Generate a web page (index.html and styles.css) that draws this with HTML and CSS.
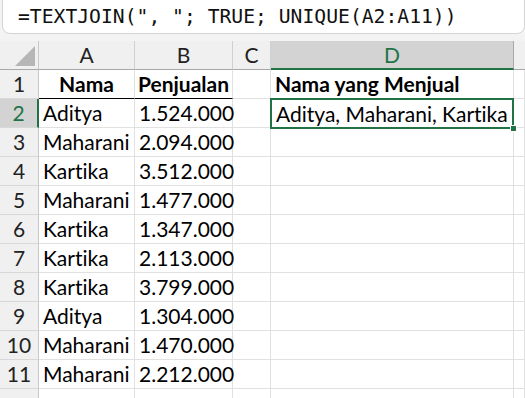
FILE: index.html
```html
<!DOCTYPE html>
<html>
<head>
<meta charset="utf-8">
<link rel="stylesheet" href="styles.css">
</head>
<body>
<div class="app">
  <div class="fbar-wrap">
    <div class="fbar">=TEXTJOIN(", "; TRUE; UNIQUE(A2:A11))</div>
  </div>
  <div class="sheet">
    <div class="corner"><span class="tri"></span></div>
    <div class="ch">A</div>
    <div class="ch">B</div>
    <div class="ch">C</div>
    <div class="ch sel">D</div>
    <div class="ch last"></div>

    <div class="rh">1</div>
    <div class="c b center hb">Nama</div>
    <div class="c b center hb">Penjualan</div>
    <div class="c"></div>
    <div class="c b">Nama yang Menjual</div>
    <div class="c"></div>

    <div class="rh sel">2</div>
    <div class="c">Aditya</div>
    <div class="c num">1.524.000</div>
    <div class="c"></div>
    <div class="c active">Aditya, Maharani, Kartika<span class="handle"></span></div>
    <div class="c"></div>

    <div class="rh">3</div>
    <div class="c">Maharani</div>
    <div class="c num">2.094.000</div>
    <div class="c"></div><div class="c"></div><div class="c"></div>

    <div class="rh">4</div>
    <div class="c">Kartika</div>
    <div class="c num">3.512.000</div>
    <div class="c"></div><div class="c"></div><div class="c"></div>

    <div class="rh">5</div>
    <div class="c">Maharani</div>
    <div class="c num">1.477.000</div>
    <div class="c"></div><div class="c"></div><div class="c"></div>

    <div class="rh">6</div>
    <div class="c">Kartika</div>
    <div class="c num">1.347.000</div>
    <div class="c"></div><div class="c"></div><div class="c"></div>

    <div class="rh">7</div>
    <div class="c">Kartika</div>
    <div class="c num">2.113.000</div>
    <div class="c"></div><div class="c"></div><div class="c"></div>

    <div class="rh">8</div>
    <div class="c">Kartika</div>
    <div class="c num">3.799.000</div>
    <div class="c"></div><div class="c"></div><div class="c"></div>

    <div class="rh">9</div>
    <div class="c">Aditya</div>
    <div class="c num">1.304.000</div>
    <div class="c"></div><div class="c"></div><div class="c"></div>

    <div class="rh">10</div>
    <div class="c">Maharani</div>
    <div class="c num">1.470.000</div>
    <div class="c"></div><div class="c"></div><div class="c"></div>

    <div class="rh">11</div>
    <div class="c">Maharani</div>
    <div class="c num">2.212.000</div>
    <div class="c"></div><div class="c"></div><div class="c"></div>

    <div class="rh"></div>
    <div class="c"></div><div class="c"></div><div class="c"></div><div class="c"></div><div class="c"></div>
  </div>
</div>
</body>
</html>
```

FILE: styles.css
```css
* { box-sizing: border-box; }
html, body { margin: 0; padding: 0; }
body {
  width: 525px;
  height: 398px;
  overflow: hidden;
  background: #f3f3f3;
  font-family: Lato, "Liberation Sans", sans-serif;
  font-variant-ligatures: none;
  color: #000;
}
.app { display: flex; flex-direction: column; height: 398px; overflow: hidden; }
.fbar-wrap { height: 41px; flex: none; padding-left: 2px; }
.fbar {
  height: 42px;
  margin-top: -8px;
  background: #fff;
  border: 1px solid #d4d4d4;
  border-radius: 8px;
  font-family: "DejaVu Sans Mono", "Liberation Mono", monospace;
  font-size: 19.7px;
  line-height: 22px;
  padding: 13px 0 0 15px;
  white-space: pre;
  color: #111;
}
.sheet {
  display: grid;
  grid-template-columns: 39px 96px 98px 38px 243px 1fr;
  grid-template-rows: 29px repeat(12, 29px);
  background: #fff;
}
.corner {
  background: #f0f0f0;
  border-right: 1px solid #c8c8c8;
  border-bottom: 1px solid #a8a8a8;
  position: relative;
}
.tri {
  position: absolute;
  right: 3px;
  bottom: 3px;
  width: 0; height: 0;
  border-left: 20px solid transparent;
  border-bottom: 20px solid #b6b6b6;
}
.ch {
  background: #f0f0f0;
  border-right: 1px solid #d0d0d0;
  border-bottom: 1px solid #a8a8a8;
  font-size: 21px;
  text-align: center;
  line-height: 28px;
  color: #222;
}
.ch.sel {
  background: #d3d3d3;
  color: #217346;
  border-bottom: 2px solid #217346;
  border-right-color: #a8a8a8;
}
.ch.last { border-right: none; }
.rh {
  background: #f0f0f0;
  border-right: 1px solid #c8c8c8;
  border-bottom: 1px solid #d8d8d8;
  font-size: 21px;
  text-align: center;
  line-height: 28px;
  color: #222;
}
.rh.sel {
  background: #d3d3d3;
  color: #217346;
  border-right: 2px solid #217346;
}
.c {
  border-right: 1px solid #e1e1e1;
  border-bottom: 1px solid #e1e1e1;
  font-size: 21px;
  line-height: 28px;
  padding: 0 3px 0 4px;
  white-space: nowrap;
}
.b { font-weight: bold; }
.center { text-align: center; padding: 0; }
.num { text-align: right; }
.hb { border-bottom: 1px solid #000; }
.active {
  position: relative;
  border: 2px solid #217346;
  margin: -1px 0 -1px -1px;
  padding-left: 4px;
  line-height: 27px;
}
.handle {
  position: absolute;
  right: -5px;
  bottom: -5px;
  width: 7px;
  height: 7px;
  background: #217346;
  border: 1px solid #fff;
}
```
